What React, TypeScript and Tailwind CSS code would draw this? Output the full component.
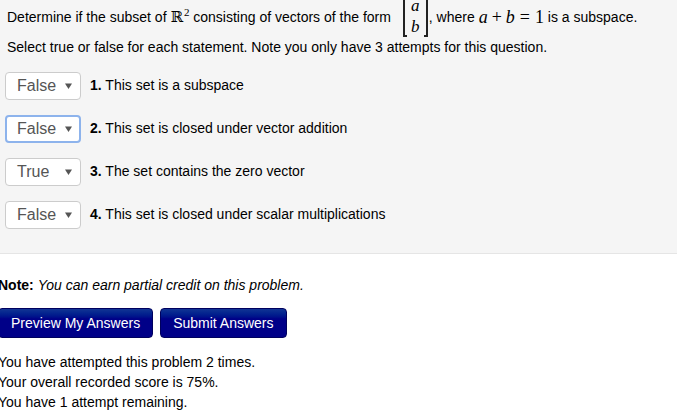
import React from "react";

const Select = ({ value, focused }: { value: string; focused?: boolean }) => (
  <div
    className={
      "w-[76px] h-[28px] shrink-0 rounded-[4px] bg-white flex items-center justify-between text-[16px] text-[#555] " +
      (focused
        ? "border-2 border-[#8db3ec] pl-[10px] pr-[7px]"
        : "border border-[#cccccc] pl-[11px] pr-[8px]")
    }
  >
    <span>{value}</span>
    <svg width="7" height="6" viewBox="0 0 7 6">
      <path d="M0 0.5 L7 0.5 L3.5 6 Z" fill="#555" />
    </svg>
  </div>
);

const Row = ({ v, n, text, focused }: { v: string; n: string; text: string; focused?: boolean }) => (
  <div className="flex items-center gap-[9px]">
    <Select value={v} focused={focused} />
    <div className="text-[14px] text-black -mt-[2px]">
      <b>{n}</b> {text}
    </div>
  </div>
);

const serif = { fontFamily: '"Liberation Serif", "DejaVu Serif", serif' };

export default function App() {
  return (
    <div
      className="w-[677px] h-[415px] overflow-hidden bg-white text-black"
      style={{ fontFamily: '"Liberation Sans", Arial, sans-serif' }}
    >
      <div className="bg-[#f5f5f5] h-[254px] border-b border-[#e5e5e5] pl-[7px] flex flex-col">
        <div className="-mt-[3px] h-[40px] flex items-center text-[14px] whitespace-nowrap">
          <span>Determine if the subset of&nbsp;</span>
          <span className="text-[15px]" style={{ fontFamily: '"DejaVu Serif", serif' }}>
            ℝ<sup className="text-[11px] -top-[6px] ml-[1px]" style={serif}>2</sup>
          </span>
          <span>&nbsp;consisting of vectors of the form&nbsp;</span>
          <span className="flex items-stretch h-[40px] ml-[8px] mr-[1px]">
            <span className="w-[4px] border-l-2 border-t-2 border-b-2 border-[#222]" />
            <span
              className="w-[17px] flex flex-col items-center justify-between pb-[1px] text-[17px] italic leading-[18px]"
              style={serif}
            >
              <span>a</span>
              <span>b</span>
            </span>
            <span className="w-[4px] border-r-2 border-t-2 border-b-2 border-[#222]" />
          </span>
          <span>, where&nbsp;</span>
          <span className="text-[18px] flex items-center" style={serif}>
            <i>a</i>
            <span className="px-[4px]">+</span>
            <i>b</i>
            <span className="px-[5px]">=</span>
            <span>1</span>
          </span>
          <span>&nbsp;is a subspace.</span>
        </div>
        <div className="h-[20px] leading-[20px] text-[14px]">
          Select true or false for each statement. Note you only have 3 attempts for this question.
        </div>
        <div className="mt-[15px] -ml-[2px] flex flex-col gap-[15px]">
          <Row v="False" n="1." text="This set is a subspace" />
          <Row v="False" n="2." text="This set is closed under vector addition" focused />
          <Row v="True" n="3." text="The set contains the zero vector" />
          <Row v="False" n="4." text="This set is closed under scalar multiplications" />
        </div>
      </div>
      <div className="-ml-[2px] text-[14px] flex flex-col">
        <div className="mt-[21px] h-[20px] leading-[20px]">
          <b>Note:</b> <i>You can earn partial credit on this problem.</i>
        </div>
        <div className="mt-[13px] flex gap-[7px]">
          <button className="h-[30px] px-[12px] rounded-[4px] border border-[#00005e] bg-linear-to-b from-[#123494] to-[#000088] from-[0%] to-[35%] text-white text-[14px]">
            Preview My Answers
          </button>
          <button className="h-[30px] px-[12px] rounded-[4px] border border-[#00005e] bg-linear-to-b from-[#123494] to-[#000088] from-[0%] to-[35%] text-white text-[14px]">
            Submit Answers
          </button>
        </div>
        <div className="mt-[14px] leading-[20px]">
          <div>You have attempted this problem 2 times.</div>
          <div>Your overall recorded score is 75%.</div>
          <div>You have 1 attempt remaining.</div>
        </div>
      </div>
    </div>
  );
}
